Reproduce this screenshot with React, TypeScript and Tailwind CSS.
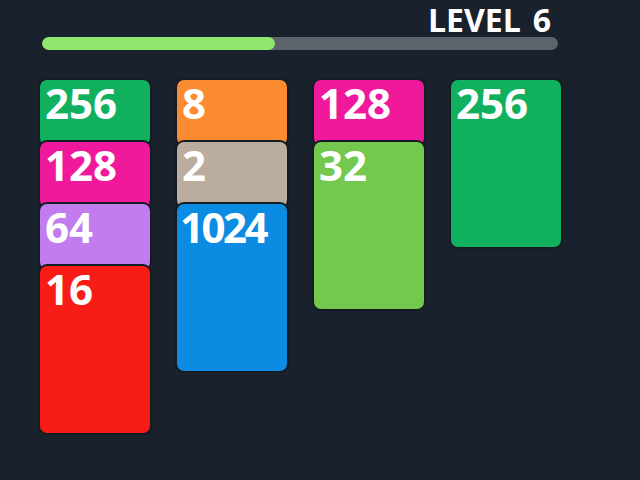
import React from "react";

type Tile = { v: string; c: string };

const cols: Tile[][] = [
  [
    { v: "256", c: "bg-[#11b05f]" },
    { v: "128", c: "bg-[#f0189b]" },
    { v: "64", c: "bg-[#c27cf0]" },
    { v: "16", c: "bg-[#f71c16]" },
  ],
  [
    { v: "8", c: "bg-[#fa8b30]" },
    { v: "2", c: "bg-[#bbad9e]" },
    { v: "1024", c: "bg-[#0b8be1]" },
  ],
  [
    { v: "128", c: "bg-[#f0189b]" },
    { v: "32", c: "bg-[#74c84e]" },
  ],
  [{ v: "256", c: "bg-[#11b05f]" }],
];

export default function App() {
  return (
    <div
      className="w-[640px] h-[480px] bg-[#19222c]"
      style={{ fontFamily: '"Open Sans", "Noto Sans", sans-serif' }}
    >
      <div className="flex justify-end pr-[89px] pt-[4px] h-[37px]">
        <div className="text-white font-bold text-[32px] leading-none flex gap-[12px] tracking-[0px]">
          <span>LEVEL</span>
          <span>6</span>
        </div>
      </div>
      <div className="ml-[42px] w-[516px] h-[13px] rounded-full bg-[#5b636b] overflow-hidden">
        <div className="h-full w-[233px] rounded-full bg-[#8fe76d]" />
      </div>
      <div className="flex gap-[23px] pl-[38px] mt-[28px] items-start">
        {cols.map((col, ci) => (
          <div key={ci} className="w-[114px] flex flex-col">
            {col.map((t, ti) => {
              const last = ti === col.length - 1;
              const wide = t.v.length > 3;
              return (
                <div
                  key={ti}
                  className={`${t.c} ${last ? "h-[171px]" : "h-[69px]"} ${
                    ti > 0 ? "mt-[-7px]" : ""
                  } rounded-[9px] border-2 border-[#141b22] ${
                    wide ? "px-[3px] tracking-[-2.5px]" : "px-[5px] tracking-[0px]"
                  } pt-[1px] text-white font-bold text-[42px] leading-[44px]`}
                >
                  {t.v}
                </div>
              );
            })}
          </div>
        ))}
      </div>
    </div>
  );
}
